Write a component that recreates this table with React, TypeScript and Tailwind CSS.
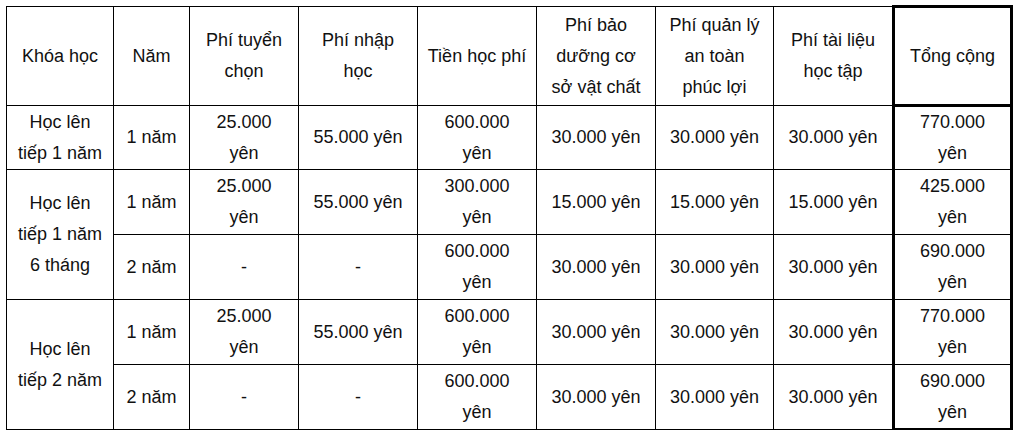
type Cell = { text: string[]; rowSpan?: number };

const header: string[][] = [
  ["Khóa học"],
  ["Năm"],
  ["Phí tuyển", "chọn"],
  ["Phí nhập", "học"],
  ["Tiền học phí"],
  ["Phí bảo", "dưỡng cơ", "sở vật chất"],
  ["Phí quản lý", "an toàn", "phúc lợi"],
  ["Phí tài liệu", "học tập"],
  ["Tổng cộng"],
];

const rows: Cell[][] = [
  [
    { text: ["Học lên", "tiếp 1 năm"] },
    { text: ["1 năm"] },
    { text: ["25.000", "yên"] },
    { text: ["55.000 yên"] },
    { text: ["600.000", "yên"] },
    { text: ["30.000 yên"] },
    { text: ["30.000 yên"] },
    { text: ["30.000 yên"] },
    { text: ["770.000", "yên"] },
  ],
  [
    { text: ["Học lên", "tiếp 1 năm", "6 tháng"], rowSpan: 2 },
    { text: ["1 năm"] },
    { text: ["25.000", "yên"] },
    { text: ["55.000 yên"] },
    { text: ["300.000", "yên"] },
    { text: ["15.000 yên"] },
    { text: ["15.000 yên"] },
    { text: ["15.000 yên"] },
    { text: ["425.000", "yên"] },
  ],
  [
    { text: ["2 năm"] },
    { text: ["-"] },
    { text: ["-"] },
    { text: ["600.000", "yên"] },
    { text: ["30.000 yên"] },
    { text: ["30.000 yên"] },
    { text: ["30.000 yên"] },
    { text: ["690.000", "yên"] },
  ],
  [
    { text: ["Học lên", "tiếp 2 năm"], rowSpan: 2 },
    { text: ["1 năm"] },
    { text: ["25.000", "yên"] },
    { text: ["55.000 yên"] },
    { text: ["600.000", "yên"] },
    { text: ["30.000 yên"] },
    { text: ["30.000 yên"] },
    { text: ["30.000 yên"] },
    { text: ["770.000", "yên"] },
  ],
  [
    { text: ["2 năm"] },
    { text: ["-"] },
    { text: ["-"] },
    { text: ["600.000", "yên"] },
    { text: ["30.000 yên"] },
    { text: ["30.000 yên"] },
    { text: ["30.000 yên"] },
    { text: ["690.000", "yên"] },
  ],
];

// column widths, line to line, measured off the screenshot
const colClasses = [
  "w-[107px]",
  "w-[76px]",
  "w-[109px]",
  "w-[119px]",
  "w-[119px]",
  "w-[119px]",
  "w-[118px]",
  "w-[120px]",
  "w-[118px]",
];

const rowClasses = ["h-[64px]", "h-[65px]", "h-[65px]", "h-[65px]", "h-[65px]"];

const cellBase = "text-center align-middle border border-black p-0 font-normal";

function Lines({ text }: { text: string[] }) {
  return (
    <>
      {text.map((t, i) => (
        <div key={i}>{t}</div>
      ))}
    </>
  );
}

export default function App() {
  return (
    <div className="w-[1015px] h-[430px] bg-white overflow-hidden pt-[5px] pl-[6px] font-['Liberation_Sans',Arial,sans-serif] text-[18px] leading-[31px] text-[#111]">
      <table className="table-fixed border-collapse w-[1005px]">
        <colgroup>
          {colClasses.map((c, i) => (
            <col key={i} className={c} />
          ))}
        </colgroup>
        <thead>
          <tr className="h-[99px]">
            {header.map((h, i) => (
              <th key={i} className={i === 8 ? `${cellBase} border-[3px]` : cellBase}>
                <Lines text={h} />
              </th>
            ))}
          </tr>
        </thead>
        <tbody>
          {rows.map((r, ri) => (
            <tr key={ri} className={rowClasses[ri]}>
              {r.map((c, ci) => {
                const last = ci === r.length - 1;
                let cls = cellBase;
                if (last) cls += " border-x-[3px]";
                if (last && ri === rows.length - 1) cls += " border-b-[3px]";
                return (
                  <td key={ci} rowSpan={c.rowSpan} className={cls}>
                    <Lines text={c.text} />
                  </td>
                );
              })}
            </tr>
          ))}
        </tbody>
      </table>
    </div>
  );
}
